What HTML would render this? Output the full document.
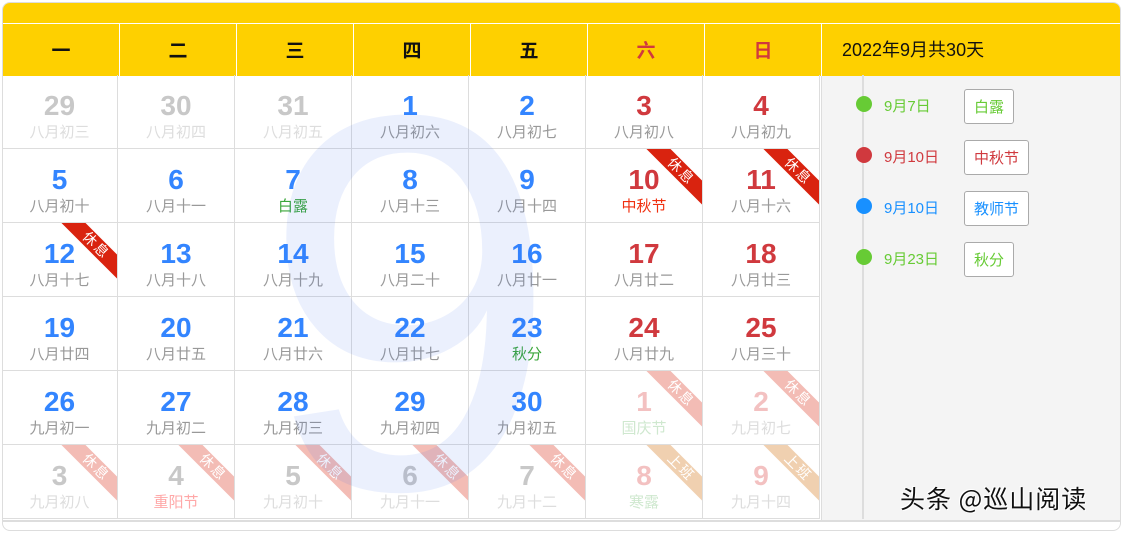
<!DOCTYPE html>
<html><head><meta charset="utf-8"><style>
*{margin:0;padding:0;box-sizing:border-box}
html,body{width:1123px;height:533px;overflow:hidden}
body{background:#fff;position:relative;font-family:"Liberation Sans","Noto Sans CJK SC",sans-serif}
.frame{position:absolute;left:2px;top:2px;width:1119px;height:529px;border:1px solid #ddd;border-radius:8px;overflow:hidden;background:#fff}
.topbar{position:absolute;left:0;top:0;width:1119px;height:20px;background:#fed000}
.hd{position:absolute;top:21px;height:52px;background:#fed000;border-left:1px solid #fff;font:bold 19px "Noto Sans CJK SC",sans-serif;text-align:center;line-height:52px;color:#111}
.hd.r{color:#d0393e}
.side{position:absolute;left:818px;top:73px;width:301px;height:446px;background:#f4f4f4;border-left:1px solid #ddd}
.cell{position:absolute;width:117px;height:74px;border-right:1px solid #ddd;border-bottom:1px solid #ddd;overflow:hidden;text-align:center}
.n{position:absolute;left:0;right:0;top:15px;font:bold 28px/32px "Liberation Sans","Noto Sans CJK SC",sans-serif;color:#3385ff}
.l{position:absolute;left:0;right:0;top:48px;font:15px/18px "Noto Sans CJK SC",sans-serif;color:#999}
.red .n{color:#d0393e}
.dim .n{color:#c8c8c8}.dim .l{color:#ddd}
.g{color:#3aa63a!important}
.rib{position:absolute;width:90px;height:17px;left:50px;top:14px;transform:rotate(45deg);background:#d9230f;color:#fff;font:14px/17px "Noto Sans CJK SC",sans-serif;text-align:center;letter-spacing:2px}
.rib.f{background:#f3bcb5}
.rib.w{background:#f0d0b0}
.dot{position:absolute;left:856px;width:16px;height:16px;border-radius:50%}
.dt{position:absolute;left:884px;font:15px/18px "Liberation Sans","Noto Sans CJK SC",sans-serif}
.tag{position:absolute;left:964px;height:35px;border:1px solid #aaa;border-radius:3px;background:#fff;font:15px/33px "Noto Sans CJK SC",sans-serif;padding:0 9px}
</style></head><body>
<div class="frame">
<div class="topbar"></div>
<div class="hd" style="left:0;width:116px;border-left:0">一</div>
<div class="hd" style="left:116px;width:117px">二</div>
<div class="hd" style="left:233px;width:117px">三</div>
<div class="hd" style="left:350px;width:117px">四</div>
<div class="hd" style="left:467px;width:117px">五</div>
<div class="hd r" style="left:584px;width:117px">六</div>
<div class="hd r" style="left:701px;width:117px">日</div>
<div class="hd" style="left:818px;width:301px;font:18px/52px 'Liberation Sans','Noto Sans CJK SC',sans-serif;text-align:left;padding-left:20px">2022年9月共30天</div>
<div class="side"></div>
<div style="position:absolute;left:0;top:517px;width:1119px;height:2px;background:#ddd"></div>
</div>
<div style="position:absolute;left:862px;top:75px;width:2px;height:444px;background:#ddd"></div>
<div id="g" style="position:absolute;left:2px;top:75px"></div>
<div class="dot" style="top:96px;background:#67cb35"></div><div class="dt" style="top:98px;color:#67cb35">9月7日</div><div class="tag" style="top:89px;color:#67cb35">白露</div>
<div class="dot" style="top:147px;background:#d0393e"></div><div class="dt" style="top:149px;color:#d0393e">9月10日</div><div class="tag" style="top:140px;color:#d0393e">中秋节</div>
<div class="dot" style="top:198px;background:#1890ff"></div><div class="dt" style="top:200px;color:#1890ff">9月10日</div><div class="tag" style="top:191px;color:#1890ff">教师节</div>
<div class="dot" style="top:249px;background:#67cb35"></div><div class="dt" style="top:251px;color:#67cb35">9月23日</div><div class="tag" style="top:242px;color:#67cb35">秋分</div>
<div style="position:absolute;left:900px;top:482px;font:25px/32px 'Noto Sans CJK SC',sans-serif;letter-spacing:1px;color:#111;white-space:nowrap;text-shadow:1px 1px 0 #fff,-1px -1px 0 #fff">头条 @巡山阅读</div>
<script>
var d=[
["29","八月初三","dim"],["30","八月初四","dim"],["31","八月初五","dim"],["1","八月初六"],["2","八月初七"],["3","八月初八","red"],["4","八月初九","red"],
["5","八月初十"],["6","八月十一"],["7","白露","","g"],["8","八月十三"],["9","八月十四"],["10","中秋节","red","#f03010","休息"],["11","八月十六","red","","休息"],
["12","八月十七","","","休息"],["13","八月十八"],["14","八月十九"],["15","八月二十"],["16","八月廿一"],["17","八月廿二","red"],["18","八月廿三","red"],
["19","八月廿四"],["20","八月廿五"],["21","八月廿六"],["22","八月廿七"],["23","秋分","","g"],["24","八月廿九","red"],["25","八月三十","red"],
["26","九月初一"],["27","九月初二"],["28","九月初三"],["29","九月初四"],["30","九月初五"],["1","国庆节","pk","#cfe8cf","休息f"],["2","九月初七","pk","","休息f"],
["3","九月初八","dim","","休息f"],["4","重阳节","dim","#ffa8a8","休息f"],["5","九月初十","dim","","休息f"],["6","九月十一","dim","","休息f"],["7","九月十二","dim","","休息f"],["8","寒露","pk","#cfe8cf","上班w"],["9","九月十四","pk","","上班w"]];
var h="";
d.forEach(function(c,i){var col=i%7,row=Math.floor(i/7);var x=col==0?0:116+(col-1)*117,w=col==0?116:117;
var cls=c[2]=="pk"?"dim":(c[2]||"");
var ns=c[2]=="pk"?' style="color:#f3c1c1"':'';
var ls="";if(c[3]=="g")ls=' class="l g"';else if(c[3])ls=' class="l" style="color:'+c[3]+'"';else ls=' class="l"';
var rb="";if(c[4]){var t=c[4].replace(/[fw]$/,""),k=c[4].slice(-1);rb='<div class="rib'+(k=="f"?" f":k=="w"?" w":"")+'" style="left:'+(w-67)+'px">'+t+'</div>';}
h+='<div class="cell '+cls+'" style="left:'+x+'px;top:'+(row*74)+'px;width:'+w+'px">'+rb+'<div class="n"'+ns+'>'+c[0]+'</div><div'+ls+'>'+c[1]+'</div></div>';});
document.getElementById("g").innerHTML=h;
</script>
<svg style="position:absolute;left:0;top:0;pointer-events:none" width="1123" height="533"><text x="410" y="488" text-anchor="middle" font-family="Liberation Sans" font-size="535" fill="rgb(60,110,235)" fill-opacity="0.1">9</text></svg>
</body></html>
